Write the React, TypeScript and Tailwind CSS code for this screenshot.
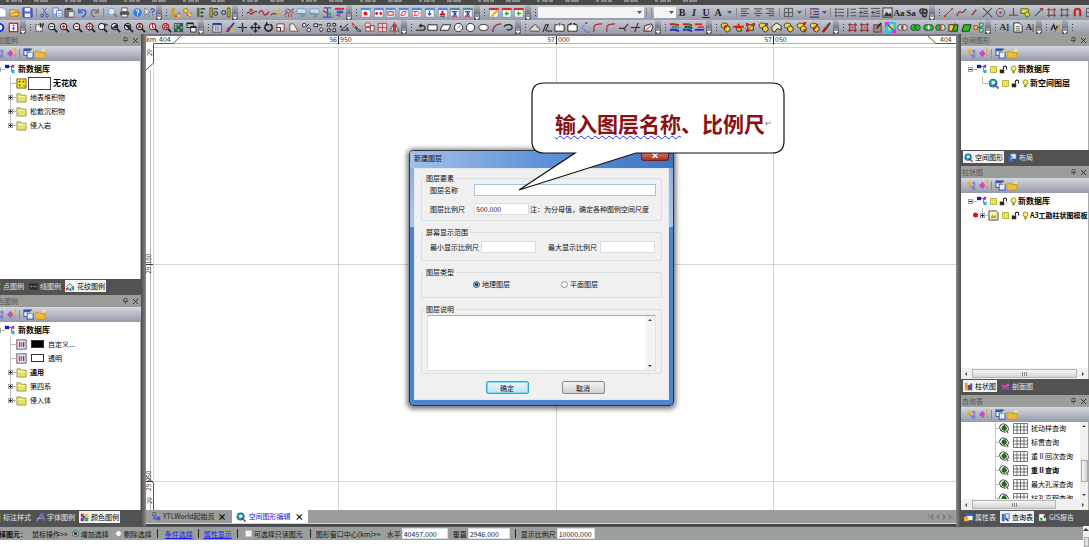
import React from "react";

const R = "#d42a2a";
const K = "#222";
const B = "#2b50d8";
const Y = "#f2d43c";
const G = "#23c623";

type Glyph = React.ReactNode;

const Lens = ({ c = K, children }: { c?: string; children?: React.ReactNode }) => (
  <g fill="none" stroke={c}>
    <circle cx="5" cy="5" r="3.4" fill="#f3f3f3" strokeWidth="1.1" />
    <path d="M7.6 7.6L11 11" stroke={K} strokeWidth="2" />
    {children}
  </g>
);
const Win = ({ top = "#4f8be0", children }: { top?: string; children?: React.ReactNode }) => (
  <g>
    <rect x="1.5" y="1.5" width="9.5" height="9.5" fill="#fff" stroke="#7d93bb" strokeWidth=".8" />
    <rect x="1" y="1" width="10.5" height="2.4" fill={top} />
    {children}
  </g>
);
const Poly = ({ children }: { children?: React.ReactNode }) => (
  <g>
    <path d="M1 3l3-2 4 1 1 3-4 2-3-1z" fill={Y} stroke={K} strokeWidth=".8" />
    <path d="M5 6l3-2 3 2v3l-3 2-3-2z" fill={Y} stroke={K} strokeWidth=".9" />
    {children}
  </g>
);
const Rings = ({ a = "none", b = "none", m = "none" }: { a?: string; b?: string; m?: string }) => (
  <g stroke={K} strokeWidth=".8">
    <circle cx="4" cy="6" r="3.2" fill={a} />
    <circle cx="8" cy="6" r="3.2" fill={b} />
    <ellipse cx="6" cy="6" rx="1.3" ry="2.5" fill={m} stroke="none" />
  </g>
);
const S = ({ d, c = K, f = "none", w = 1 }: { d: string; c?: string; f?: string; w?: number }) => (
  <path d={d} stroke={c} fill={f} strokeWidth={w} />
);

const glyphs: Record<string, Glyph> = {
  new: <S d="M2 1h5l3 3v7H2z" c="#8192b4" f="#fff" />,
  open: (<g><S d="M1 10V3h4l1 1h4v6z" c="#a87a1c" f="#f7d774" /><S d="M1 10l3-4h8l-3 4z" c="#b8861e" f="#fbc640" /></g>),
  save: (<g><S d="M1 1h9l1 1v9H1z" c="#3a3ca0" f="#5a5fd0" /><path d="M3 1h6v4H3zM3 7h6v4H3z" fill="#eef" /></g>),
  cut: (<g><S d="M4 1l4 7M8 1L4 8" c="#4a6ab8" /><circle cx="3.4" cy="9.4" r="1.6" stroke={B} fill="none" /><circle cx="8.6" cy="9.4" r="1.6" stroke={B} fill="none" /></g>),
  copy: (<g><S d="M1 1h6v7H1z" c="#5a7cc0" f="#e9f0fc" /><S d="M5 4h6v7H5z" c="#5a7cc0" f="#fff" /><S d="M6 7h4M6 9h4" c="#7d9bd8" /></g>),
  paste: (<g><S d="M1 2h8v9H1z" c="#555" f="#777" /><S d="M5 5h6v6H5z" c="#666" f="#e6e6e6" /><path d="M3 1h4v2H3z" fill="#333" /></g>),
  undo: <S d="M2 2v4h4M2.500 5.500C5 1.500 10 2.500 9.500 6.500S7 10 5.500 11" c="#3a68d8" w={1.7} />,
  redo: <S d="M10 2v4H6M9.500 5.500C7 1.500 2 2.500 2.500 6.500S5 10 6.500 11" c="#6c7078" w={1.5} />,
  find: (<g><circle cx="5" cy="5" r="3.600" fill="#d9ecfa" stroke="#6e9cc8" /><S d="M7.500 7.500L11 11" c="#a8701e" w={2} /></g>),
  print: (<g><path d="M3 1h6v4H3z" fill="#fff" stroke="#555" /><path d="M1 5h10v4H1z" fill="#555" /><path d="M3 8h6v3H3z" fill="#fff" stroke="#555" /></g>),
  help: (<g><circle cx="6" cy="6" r="4.600" fill="#2d7be4" /><path d="M4.500 4.500c0-2 3-2 3 0 0 1-1.500 1-1.500 2.500M6 8v1.300" fill="none" stroke="#fff" strokeWidth="1.200" /></g>),
  helpq: (<g><S d="M1 1v8l2-2 2 4 1-1-2-4h3z" c="#555" f="#fff" w={0.7} /><path d="M7.500 3.500c0-2.500 3.500-2.500 3.500 0 0 1.200-1.700 1.200-1.700 2.800M9.300 7.500V9" fill="none" stroke={B} strokeWidth="1.300" /></g>),
  barA: (<g><path d="M2 1h3v10H2z" fill="#c8a41e" /><S d="M5 10h4l1-4" c={R} w={1.4} /><path d="M8 8h3v3H8z" fill={Y} /></g>),
  barB: (<g><circle cx="4" cy="4" r="2.400" fill={Y} stroke="#a07c14" /><S d="M5 8l4 2 1-4" c={R} w={1.200} /><path d="M7 7h3v3H7z" fill={Y} /></g>),
  barC: (<g><path d="M2 1h3v10H2z" fill="#5a7a1c" /><S d="M6 2h5M6 6h3M6 10h3" w={1.400} /></g>),
  barD: (<g><path d="M2 1h3v10H2z" fill="#c8a41e" stroke={K} strokeWidth=".6" /><circle cx="8.500" cy="7" r="2" fill="none" stroke={K} /><S d="M6 2h5" /></g>),
  barE: (<g><circle cx="4" cy="6" r="2.200" fill="none" stroke={K} /><path d="M8 1h3v10H8z" fill="#c8a41e" stroke={K} strokeWidth=".6" /></g>),
  curveA: (<g><S d="M1 7c3-4 4 3 6 0s3-2 5-2" c="#a02020" w={1.200} /><path d="M4 2h3v3H4z" fill={R} /></g>),
  curveB: <S d="M1 7c2-5 4-3 5 0s3 2 6-2" c="#c02222" w={1.400} />,
  curveC: (<g><S d="M0 9c3-4 4 0 6-2" c="#a02020" w={1.200} /><S d="M6 7l4-5" c="#e8b220" w={2.400} /></g>),
  curveD: <S d="M1 5l3-3 3 2 4-2M1 9l2-4 2 2 3-2 3 2M2 10v1M5 8v3M8 8v3" c="#9c3030" />,
  scr: (<g><S d="M1 2h10v5H1z" c="#6e9fc8" f="#c4e0f0" /><S d="M1 8c3-3 5 2 9 0" c="#4b7e9e" /><S d="M5 10h4" c="#3a9a70" /></g>),
  measA: (<g><S d="M2 1h8M6 1v10M1 11h10" c="#3d54c8" w={1.500} /><S d="M1 4l9 5" c={R} w={1.500} /><path d="M7 6h3v3H7z" fill="#2a9" /></g>),
  measB: (<g><path d="M1 1h10v2H1z" fill={R} /><path d="M3 4h7v3H3z" fill="#3a58d0" /><S d="M6 6v5M2 9h3" c="#a040c0" w={1.500} /></g>),
  winDot: <Win><circle cx="6" cy="7" r="2.200" fill="#e01818" /></Win>,
  winDots: <Win><circle cx="4" cy="7" r="1.600" fill="#e01818" /><circle cx="8.500" cy="7" r="1.600" fill="#e01818" /></Win>,
  winRect: <Win><S d="M3 5h6v4H3z" c={R} f="#f8dada" /></Win>,
  winSlant: <Win><S d="M3 9l2-4h4l-2 4z" c={R} /></Win>,
  winD: <Win><S d="M3 5h4c3 1 3 3 0 4H3l2-2z" c={R} /></Win>,
  winDown: <Win><S d="M6 4v5M4 7l2 2 2-2" c={B} w={1.300} /></Win>,
  winStamp: <Win><path d="M5 4h2v3h2v2H3V7h2z" fill="#c01010" /><S d="M3 10h6" /></Win>,
  winI: <Win top="#3a9a8a"><S d="M3 5h6M6 5v5M3 10h6" c="#b02050" w={1.300} /><path d="M5 6h3v3H5z" fill={B} /></Win>,
  calPen: <Win top={R}><S d="M4 10l6-6" c="#e8a820" w={2.200} /></Win>,
  calPlus: <Win top={R}><S d="M6 9.500V5M4 7h5" c="#2bb52b" w={1.600} /></Win>,
  left: <S d="M1 2h9M1 4.500h6M1 7h9M1 9.500h6" c="#444" />,
  center: <S d="M1 2h9M3 4.500h5M1 7h9M3 9.500h5" c="#444" />,
  right: <S d="M1 2h9M4 4.500h6M1 7h9M4 9.500h6" c="#444" />,
  border: <S d="M1.500 1.500h9v9h-9zM6 1.500v9M1.500 6h9" c="#555" />,
  spacing: (<g><S d="M1 2h10M5 5h6M5 8h6M1 11h10" c="#533a7c" w={1.300} /><S d="M2 4v5" c={R} /></g>),
  bullets: (<g><S d="M4 2.500h7M4 6h7M4 9.500h7" c="#555" w={1.200} /><path d="M1 1.500h2v2H1zM1 5h2v2H1zM1 8.500h2v2H1z" fill="#444" /></g>),
  numbers: (<g><S d="M5 2.500h6M5 6h6M5 9.500h6M2 1v10" c="#555" w={1.200} /></g>),
  indent: <S d="M1 1.500h10M6 4.500h5M6 7h5M1 10h10M4 4L1.500 6 4 8M2 6h4" c="#444" />,
  image: (<g><rect x="1" y="1" width="10" height="10" fill="#d0d4dc" stroke="#333" /><path d="M2 10l3-5 2 3 2-2 2 4z" fill="#333" /></g>),
  knot: (<g fill="#8a8d94" stroke="#333" strokeWidth="1.500"><circle cx="4.500" cy="4.500" r="2.500" /><circle cx="7.500" cy="5" r="2.500" /><circle cx="7" cy="8.500" r="2.200" /></g>),
  line: (<g><S d="M2 10l8-8" c="#7a3434" /><path d="M9 1h2v2H9zM1 9h2v2H1z" fill={R} /></g>),
  zig: <S d="M1 10c2-6 3-5 5-4s3-1 5-4" c="#7a3434" w={1.200} />,
  dash: <S d="M3 9l5-6" c="#933" w={1.300} />,
  cross: <S d="M1 1l10 10M11 1L1 11" c="#555" w={1.200} />,
  target: (<g><circle cx="6" cy="6" r="4.500" fill="none" stroke="#555" /><circle cx="6" cy="6" r="1.300" fill={R} /></g>),
  perp: <S d="M6 1v8M1 9h10" c="#933" w={1.200} />,
  yshape: (<g><S d="M1 2h8v5H5L1 7z" c="#5b5b10" f={Y} /><circle cx="8" cy="8" r="2.500" fill={Y} stroke="#3a7a2a" /></g>),
  arrow: (<g><S d="M2 10l7-7" c="#555" w={1.200} /><path d="M7 1h4v4z" fill="#933" /></g>),
  crop: (<g><S d="M3 1v10M9 1v10M1 3h10M1 9h10" c="#7a3434" /></g>),
  magnet: <S d="M3 10V5c0-4 6-4 6 0v5" c="#c22" w={2.400} />,
  ring: <circle cx="4" cy="6" r="4" fill="#fff" stroke="#1b2ad0" strokeWidth="2" />,
  info: (<g><rect x="1.500" y="1.500" width="9" height="9" fill="#fff" stroke="#e02020" strokeWidth="1.500" /><path d="M5 3h2v1.500H5zM5 5.500h2V9H5z" fill={B} /></g>),
  marquee: (<g><path d="M2 3h7v7H2z" fill="#eee" stroke={K} strokeDasharray="1.500 1" /><S d="M7 1v5M9 3v3M10 1v3" w={1.300} /></g>),
  zMinus: <Lens><path d="M3 5h4" /></Lens>,
  zPlus: <Lens><path d="M3 5h4M5 3v4" stroke={R} strokeWidth="1.500" /></Lens>,
  zMinusR: <Lens><path d="M3 5h4" stroke={R} /></Lens>,
  zFit: <Lens><path d="M0 5h10M5 0v10" stroke={R} /></Lens>,
  zPan: <Lens><path d="M9 1v4M8 3h4" /></Lens>,
  zBlack: <Lens><path d="M2 7l5-4 1 3z" fill={K} /></Lens>,
  zBlack2: <Lens><path d="M2 3l5 1v4z" fill={K} /></Lens>,
  zA: <Lens><path d="M3 7l2-4 2 4M4 6h2" stroke={R} strokeWidth="1.300" /></Lens>,
  zPin: <Lens c="#823"><path d="M5 2v4l2 1" stroke={R} strokeWidth="1.300" /></Lens>,
  zGrid: <Lens c="#823"><path d="M2 4h6M2 6h6M4 2v6M6 2v6" stroke={R} /></Lens>,
  grid: (<g><rect x="1" y="1" width="10" height="10" fill="#355" /><path d="M2 2h2v2H2zM5 2h2v2H5zM2 5h2v2H2zM8 5h2v2H8zM5 8h2v2H5z" fill="#8fd08f" /></g>),
  wins: (<g><S d="M1 1h7v5H1z" f="#ccc" /><S d="M5 5h6v6H5z" f="#eee" /><path d="M1 1h7v1.500H1zM5 5h6v1.500H5z" fill={K} /></g>),
  cols: (<g><rect x="1" y="2" width="9" height="9" fill="#fff" stroke="#445" /><path d="M1 1h9v2.500H1z" fill="#2a3ab0" /><S d="M3.500 4v6M5.500 4v6M7.500 4v6" c="#556" /></g>),
  brush: (<g><S d="M4 8l6-7" c="#444" w={2} /><path d="M1 11l2-5 3 2-2 3z" fill="#a21aa2" /><path d="M6 8h4v3H6z" fill="#c8c820" /></g>),
  plus: (<g><S d="M6 1v10M1 6h10" w={1.200} /><path d="M4.500 4.500h3v3h-3z" fill="#555" /></g>),
  move: <S d="M6 1v10M1 6h10M4 3l2-2 2 2M4 9l2 2 2-2M3 4L1 6l2 2M9 4l2 2-2 2" w={1.200} />,
  rotate: <S d="M4 2.500a4 4 0 1 0 4 0M4 0v3h3" w={1.700} />,
  square: (<g><S d="M2 2h8v8H2z" c="#933" f="#eee" /><S d="M2 6h4v4" /></g>),
  trap: <S d="M2 2h4l5 8H2z" c="#844" f="#eee" />,
  shapes: (<g fill="#eee" stroke={K}><circle cx="3.500" cy="3.500" r="2" /><circle cx="8.500" cy="8.500" r="2" /><path d="M6 5l3-3" /></g>),
  shapes2: (<g fill="#eee" stroke={K}><path d="M1 2h4v3H1zM6 3h4M9 6l2 2-2 3-2-3z" /></g>),
  four: <S d="M1.500 1.500h3v3h-3zM7.500 1.500h3v3h-3zM1.500 7.500h3v3h-3zM7.500 7.500h3v3h-3z" f="#eee" />,
  angle: (<g><S d="M10 2L2 9h9" /><path d="M1 4h2v2H1zM8 6h2v2H8z" fill={K} /></g>),
  triR: (<g><S d="M1 1l2 5h4z" c={R} /><S d="M5 6l2 4h4z" f="#eee" /></g>),
  shapesR: (<g fill="#eee"><ellipse cx="4" cy="3" rx="3" ry="2" stroke={R} /><path d="M2 6h5v4H2zM7 4h4v6H7z" stroke="#844" /></g>),
  squareR: <S d="M1.500 1.500h9v9h-9zM1.500 6h9M6 1.500v9" c="#a33" f="#ded0d0" w={0.8} />,
  mirror: (<g><S d="M5 2v8H1zM7 2v8h4z" c="#555" f="#ccc" /><S d="M6 0v12" c={R} /></g>),
  hook: <S d="M1 9h7c4 0 4-5 0-5H5M7 2L5 4l2 2" w={1.200} />,
  rect: <S d="M1 3h10v6H1z" f="#fff" />,
  para: <S d="M3 3h9l-3 6H0z" f="#fff" />,
  circR: (<g><circle cx="6" cy="6" r="4.500" fill="#fff" stroke={K} /><S d="M5 7l3-3" c={R} /></g>),
  circ: <circle cx="6" cy="6" r="4.500" fill="#fff" stroke={K} />,
  ell: <ellipse cx="6" cy="6" rx="5" ry="3.300" fill="#fff" stroke={K} />,
  arc: <S d="M2 11C2 6 5 2 11 2" c="#722" w={1.200} />,
  loop: <S d="M1 5c2-3 9-3 9 1 0 3-5 3-6 2" w={1.200} />,
  cloud: <S d="M1 9c0-3 2-3 3-3 0-4 5-4 5 0 3 0 3 3 2 4H2z" c="#633" f="#ddd" />,
  penc: <S d="M1 11L4 3h3L4 9c2 2 4 0 7 1" w={1.100} />,
  gapBox: (<g><S d="M4 3H1v7h10V3H8" f="#fff" /><path d="M5 1h2v3H5z" fill={R} /></g>),
  gapBox2: (<g><S d="M4 3H1v7h10V3H8" f="#fff" /><path d="M3 1h2v2H3zM7 1h2v2H7z" fill={K} /></g>),
  dots: (<g><path d="M7 1L2 6l5 5h4" fill="none" stroke={B} strokeDasharray="2 1.500" /><path d="M6 0h2v2H6z" fill={R} /></g>),
  arcR: <S d="M2 11V6c0-3 3-4 9-4" c="#b22" w={1.200} />,
  trim: <S d="M1 7h6l4-5M7 7l1 3" c="#522" w={1.200} />,
  cross2: <S d="M1 6h10M9 1L5 11" c="#522" w={1.200} />,
  shape5: (<g><S d="M2 4l7-2 2 3-2 5-8 0z" f="#eee" /><S d="M3 9l6-5" c={R} /></g>),
  layers: (<g fill="none" strokeWidth="2.100"><path d="M1 2.500h5l5 1" stroke="#e01c1c" /><path d="M3 5.500h4l4 1" stroke="#1ca84a" /><path d="M1 8.500h6l4 1.500" stroke="#2424e0" /></g>),
  layers2: (<g fill="none" strokeWidth="2.100"><path d="M1 2.500h5l5 1" stroke="#e01c1c" /><path d="M3 5.500h4l4 1" stroke={K} /><path d="M1 8.500h6l4 1.500" stroke="#2424e0" /><path d="M4 9l3-6 3 6" stroke="#1ca84a" strokeWidth="1.300" /></g>),
  layers3: (<g fill="none" strokeWidth="1.900"><path d="M1 2.500h8" stroke="#e01c1c" /><path d="M4 5.500h7" stroke="#c44" /><path d="M1 8.500h10" stroke="#2424e0" /></g>),
  polyDot: <Poly><circle cx="6" cy="5" r="1.800" fill="#e01818" /></Poly>,
  polyBar: (<g><S d="M3 6h6v4H5z" f={Y} /><S d="M0 5h12M6 2v5" c="#e01818" w={2} /></g>),
  polyX: (<g><S d="M3 3h6v6H3z" f={Y} /><path d="M1 1h3v3H1zM8 1h3v3H8zM1 8h3v3H1z" fill="#e01818" /><S d="M3 9l6-7" c={R} /></g>),
  polyP: <Poly><path d="M8 1h3v3H8z" fill="#703ac0" /></Poly>,
  polyE: (<g><path d="M1 5l5-4 5 3v5l-4-2-3 4-3-2z" fill="#f2e8b8" stroke={K} /></g>),
  poly: <Poly />,
  polyR: <Poly><path d="M8 8h3v3H8zM8 0h3v3H8z" fill="#e01818" /></Poly>,
  polyPen: <Poly><path d="M5 9l5-7" stroke={R} strokeWidth="1.500" /></Poly>,
  pen: (<g><S d="M2 11l4-5" c="#a11" w={2.600} /><S d="M6 6l4-5" c="#444" w={2.400} /></g>),
  frameX: (<g><S d="M3 1v10M9 1v10M1 3h10M1 9h10" c="#8a2020" /><path d="M5 5h2v2H5z" fill={R} /></g>),
  penBox: (<g><S d="M2 3h8v8H2z" c="#633" f="#a88" /><S d="M5 7l5-6" w={1.600} /></g>),
  wild: (<g><path d="M0 0h12v12H0z" fill="#28c8f0" /><path d="M0 0h5L0 6zM12 12H6l6-5z" fill="#f028c8" /><path d="M3 4l6-2v7H4z" fill="#e8e828" /><S d="M3 3l6 6" c={B} w={1.500} /></g>),
  ringsM: <Rings a="#ddd" b="#ddd" m="#e03030" />,
  ringsAll: <Rings a={G} b={G} m="#178a17" />,
  ringsAll2: <Rings a={G} b={G} m="#fff" />,
  ringsL: <Rings a={G} b="#ddd" m="#e03030" />,
  half: (<g><S d="M1 3h6l-2 7H1z" f={Y} /><S d="M7 3h4l-1 7H5z" f={G} /><S d="M8 1L4 11" c={R} /></g>),
  greenP: <S d="M3 3h8l-2 7H1z" f={G} />,
  blocks: (<g><S d="M1 4h4v4H1z" c={R} f={Y} /><S d="M7 1h4v4H7zM7 7h4v4H7z" c="#2a7a5a" f="#9ad8b8" /><S d="M5 6h4" c={B} /></g>),
  page: (<g><S d="M2 1h6l3 3v7H2z" f="#fff" /><S d="M4 5h5M4 7h5M4 9h5" c="#564" /></g>),
  wpen: (<g><S d="M1 9l3-6 2 6 2-5" w={1.400} /><S d="M6 10l5-7" c="#b89020" w={1.700} /></g>),
  tools: (<g><circle cx="3.500" cy="4" r="2.500" fill="#e8b030" /><S d="M4 6l3 3 3-4" c="#c04890" /><path d="M7 2h3v3H7zM7 7h3v4H7z" fill="#6f86d8" /></g>),
  gem: (<g><path d="M1 6l4-4 3 4-3 4z" fill="#c44ad0" /><path d="M9 0h2v6H9z" fill="#e8b82c" /><path d="M9 7h2v2H9z" fill="#d09a20" /></g>),
  panes: (<g><rect x="1" y="1" width="8" height="7" fill="#fff" stroke="#2a50a0" /><path d="M1 1h9v2.500H1z" fill="#2c58c0" /><rect x="4.500" y="4.500" width="6.500" height="6.500" fill="#e8eefc" stroke="#2a50a0" /><path d="M8 2h3v3H8z" fill={Y} /></g>),
  folderN: (<g><path d="M0 4h4l1 1h6v6H0z" fill="#f2bd33" stroke="#b8862a" strokeWidth=".7" /><path d="M8 1h3v3H8z" fill="#fbe58a" /></g>),
  folder: (<g><path d="M1 2h4l1 1.500h5V11H1z" fill="#e8e06a" stroke="#8a842e" strokeWidth=".8" /><path d="M2 5h8" stroke="#fffbb8" /></g>),
  db: (<g><path d="M0 1h5v4H0z" fill="#1414d8" /><path d="M5 3h3v6h2" stroke="#555" fill="none" /><path d="M8 1h3v3.500H8z" fill="#c424b4" /><path d="M8 7h3.500v4H8z" fill="#22b8c8" /></g>),
  pattern: (<g><path d="M1 1h10v10H1z" fill="#f8e824" stroke="#6a5e10" /><path d="M3 3h2v2H3zM7 3h2v2H7zM3 7h2v2H3zM8 8h2v1H8z" fill="#554" /></g>),
  bars: (<g><rect x="1" y="1" width="10" height="10" fill="#fff" stroke="#444" /><path d="M3 3h1.600v6H3z" fill="#d01a8a" /><path d="M5.200 3h1.600v6H5.200z" fill="#e85a1a" /><path d="M7.500 3h1.700v6H7.500z" fill="#2450e0" /></g>),
  sun: (<g><path d="M2 2h8v8H2z" fill="#f4ee40" stroke="#a8a41c" /><circle cx="6" cy="6" r="2" fill="#fffbd0" stroke="#b8b020" strokeWidth=".8" /></g>),
  lock: (<g><path d="M1 6h6v5H1z" fill="#2a2a18" /><path d="M6 6V3c0-2 4-2 4 0v3" stroke={K} fill="none" strokeWidth="1.400" /></g>),
  bulb: (<g><circle cx="6" cy="4.500" r="3.300" fill="#fbf464" stroke="#7c7820" /><path d="M4.500 8h3v3h-3z" fill="#8a8418" /></g>),
  globe: (<g><circle cx="5.500" cy="5.500" r="4.800" fill="#1c66b8" /><path d="M2 3l4-1 3 3-3 2-1 3-3-4z" fill="#46b878" /><circle cx="6" cy="5" r="2" fill="#e4f4fc" /><path d="M9 9l2.500 2.500" stroke="#d03030" strokeWidth="2" /></g>),
  report: (<g><path d="M1 1h8l2 2v8H1z" fill="#f6f4b0" stroke="#444" /><path d="M3 8l2-3 2 2 2-3v5H3z" fill="#c8a020" /></g>),
  eye: (<g><ellipse cx="5.500" cy="5.500" rx="5" ry="4" fill="#eef4ee" stroke="#333" transform="rotate(35 5.500 5.500)" /><path d="M3 4l3-2 3 4-3 3-3-2z" fill="#186a28" /><path d="M8 8l2 3" stroke="#8a7a14" strokeWidth="1.600" /></g>),
  paint: (<g><path d="M1 6l4-4 4 4-4 4z" fill="#e8ecf6" stroke="#345" /><path d="M0 8h3v3H0z" fill="#e03030" /><path d="M8 6h3v5H8z" fill="#28b040" /><path d="M5 9h2v3H5z" fill={B} /></g>),
  lines: (<g><path d="M0 2h12v8H0z" fill="#2b2b2b" /><path d="M0 6h12M3 4v4M8 4v4" stroke="#777" /></g>),
  italic: (<g><path d="M1 11L8 1l3 9" stroke="#6a7ae0" strokeWidth="2" fill="none" /><path d="M1 7h8" stroke="#b8c0f8" /></g>),
  palette: (<g><path d="M1 1h4v4H1z" fill="#e02020" /><path d="M6 1h5v4H6z" fill="#e8c820" /><path d="M1 6h4v5H1z" fill="#7a28d8" /><path d="M6 6h5v5H6z" fill="#2aa83a" /><path d="M4 4h3v3H4z" fill="#2858e0" /></g>),
  layout: (<g><path d="M3 1h8v7H3z" fill="#dce6fa" stroke="#3a58a8" /><path d="M1 4h6v7H1z" fill="#3a6ad0" /><path d="M4 8l5-6" stroke="#e8ecf8" strokeWidth="1.500" /></g>),
  column: (<g><path d="M1 1h4v10H1z" fill="#e0a030" /><path d="M5 4h3v7H5z" fill="#c03030" /><path d="M8 2h3v9H8z" fill="#2a60c8" /></g>),
  section: (<g><path d="M1 2l3 3 3-2 4-1v3L7 7 4 8 1 5z" fill="#e048a0" /><path d="M1 7l3 2 7-3v4H1z" fill="#5a60d8" /></g>),
  props: (<g><path d="M3 2h9v8H3z" fill="#fff" stroke="#2a58b0" /><path d="M3 1h9v3H3z" fill="#2c68d8" /><path d="M0 5h6v6H0z" fill="#f0b030" /></g>),
  query: (<g><path d="M1 1h4v10H1z" fill="#3a70d0" /><path d="M6 1h5v7H6z" fill="#cfe0f8" stroke="#4468a8" /><path d="M6 7l4 4" stroke="#333" strokeWidth="1.600" /></g>),
  gis: (<g><path d="M1 1h7l3 3v7H1z" fill="#fff" stroke="#444" /><path d="M3 6h3v4H3z" fill="#2a9a3a" /><path d="M7 3l4 1-2 4z" fill="#222" /></g>),
  link: (<g><path d="M1 1h4v4H1z" fill="#98a4e0" stroke="#445" /><path d="M3 5v4h4" stroke={B} fill="none" strokeWidth="1.500" /><path d="M6 6h5v5H6z" fill="#4a5ad0" /></g>),
};

const letters: Record<string, string> = { fontA: "Aa", fontS: "Sa", aBox: "A]", aLine: "A|" };

function Icon({ n, className = "size-[11px]" }: { n: string; className?: string }) {
  return (
    <svg viewBox="0 0 12 12" className={`shrink-0 ${className}`} aria-hidden="true">
      {glyphs[n]}
    </svg>
  );
}

function Tools({ items }: { items: string }) {
  return (
    <>
      {items.split(" ").map((n, i) =>
        n === "|" ? (
          <span key={i} className="mx-[2px] h-[9px] w-px shrink-0 bg-[#858a96]" />
        ) : (
          <button
            key={i}
            type="button"
            aria-label={n}
            className="flex h-full min-w-0 flex-1 items-center justify-center font-['Liberation_Serif',serif] text-[9px] leading-[12px] font-bold text-[#222]"
          >
            {letters[n] ?? <Icon n={n} />}
          </button>
        )
      )}
    </>
  );
}

const Grip = () => (
  <span className="flex w-[5px] shrink-0 flex-col items-center gap-[2px]">
    <i className="size-px bg-[#444]" />
    <i className="size-px bg-[#444]" />
    <i className="size-px bg-[#444]" />
  </span>
);

const More = () => (
  <button type="button" aria-label="more" className="flex h-full w-[8px] shrink-0 items-end justify-center pr-[2px]">
    <span className="flex h-full w-[6px] items-end justify-center rounded-r-[2px] bg-linear-to-b from-[#b4b8c2] to-[#484b56]">
      <svg viewBox="0 0 6 6" className="size-[6px]"><path d="M1 1h4M1 3h4L3 5.500z" fill="#fff" stroke="#fff" strokeWidth=".6" /></svg>
    </span>
  </button>
);

function Group({ items, w, first = false }: { items: string; w: string; first?: boolean }) {
  return (
    <div className={`flex h-full shrink-0 items-center ${w}`}>
      {!first && <Grip />}
      <Tools items={items} />
      <More />
    </div>
  );
}

const Caret = () => (
  <svg viewBox="0 0 5 3" className="h-[3px] w-[5px] shrink-0"><path d="M0 0h5L2.500 3z" fill="#555" /></svg>
);

function Combo({ label, w }: { label: string; w: string }) {
  return (
    <span className={`flex h-[11px] shrink-0 items-center bg-[#f4f4f4] pr-[2px] ${w}`}>
      <select aria-label={label} className="h-full min-w-0 flex-1 appearance-none text-[7px]"><option></option></select>
      <Caret />
    </span>
  );
}

const bar = "flex shrink-0 items-center overflow-hidden bg-linear-to-b from-[#c6cad4] to-[#979ba7]";

function Toolbars() {
  const sep = <span className="mx-[2px] h-[9px] w-px shrink-0 bg-[#858a96]" />;
  const fmt = "w-[12px] shrink-0 text-center font-['Liberation_Serif',serif] text-[10px] leading-[12px] text-[#222]";
  return (
    <header className="shrink-0">
      <div className="h-[5px] bg-[#4a4a4a]">
        <svg className="block h-[5px] w-full" aria-hidden="true">
          <path d="M6 1h706" stroke="#b5b5b5" strokeWidth="2" strokeDasharray="3 2 6 1 4 12 5 1 8 17" opacity=".6" />
        </svg>
      </div>
      <div className={`${bar} h-[15px]`}>
        <div className="-ml-[4px] flex h-full shrink-0">
          <Group first w="w-[168px]" items="new open save | cut copy paste undo redo | find print help helpq" />
        </div>
        <Group w="w-[76px]" items="barA barB barC barD barE" />
        <Group w="w-[114px]" items="curveA curveB curveC curveD scr scr measA measB" />
        <Group w="w-[128px]" items="winDot winDots winRect winSlant winD winDown winStamp winI winI" />
        <Group w="w-[51px]" items="calPen calPlus calPlus" />
        <div className="flex h-full w-[404px] shrink-0 items-center">
          <Grip />
          <Combo label="字体" w="w-[106px]" />
          {sep}
          {sep}
          <Combo label="字号" w="w-[22px]" />
          <button type="button" className={`${fmt} font-bold`}>B</button>
          <button type="button" className={`${fmt} font-bold italic`}>I</button>
          <button type="button" className={`${fmt} font-bold underline`}>U</button>
          <button type="button" className={`${fmt} font-bold`}>A</button>
          <span className="flex w-[10px] justify-center"><Caret /></span>
          {sep}
          <div className="flex h-full w-[38px]"><Tools items="left center right" /></div>
          {sep}
          <div className="flex h-full w-[13px]"><Tools items="border" /></div>
          <span className="flex w-[8px] justify-center"><Caret /></span>
          {sep}
          <div className="flex h-full w-[13px]"><Tools items="spacing" /></div>
          <span className="flex w-[7px] justify-center"><Caret /></span>
          {sep}
          <div className="flex h-full min-w-0 flex-1"><Tools items="bullets numbers indent indent image fontA fontS knot" /></div>
          <More />
        </div>
        <div className="flex h-full w-[160px] shrink-0 items-center">
          <Grip />
          <Tools items="line zig dash cross target perp yshape arrow crop crop magnet border" />
        </div>
      </div>
      <div className={`${bar} h-[14px]`}>
        <div className="-ml-[5px] flex h-full shrink-0"><Group first w="w-[33px]" items="ring info" /></div>
        <Group w="w-[178px]" items="marquee zMinus zPlus zMinusR zFit zPan zBlack zBlack2 zA zPin zGrid grid wins" />
        <Group w="w-[203px]" items="cols brush plus move rotate square trap shapes shapes2 four angle triR shapesR squareR mirror" />
        <Group w="w-[114px]" items="hook rect para circR circ ell arc loop" />
        <Group w="w-[140px]" items="cloud penc gapBox gapBox2 dots arcR arcR trim cross2 shape5" />
        <Group w="w-[51px]" items="layers layers2 layers3" />
        <Group w="w-[127px]" items="polyDot polyBar polyX polyP polyE poly polyR polyPen pen" />
        <Group w="w-[152px]" items="frameX frameX penBox wild ringsM ringsAll ringsAll2 ringsL half greenP blocks" />
        <Group w="w-[51px]" items="aBox page aLine" />
        <Group w="w-[26px]" items="wpen" />
        <Grip />
      </div>
    </header>
  );
}

type Tab = { icon: string; text: string; on?: boolean };

function Panel({ title, tabs, grow, children }: { title: string; tabs: Tab[]; grow: string; children: React.ReactNode }) {
  return (
    <section className={`flex min-h-0 basis-[43px] flex-col ${grow}`}>
      <div className="flex h-[12px] shrink-0 items-center bg-[#9b9d9a] pr-[3px] pl-px text-[#555]">
        <h2 className="flex-1 text-[7px] leading-[12px] whitespace-nowrap">{title}</h2>
        <button type="button" aria-label="固定" className="mr-[5px]">
          <svg viewBox="0 0 5 6" className="h-[6px] w-[5px]"><path d="M1 .5h3v3H1zM0 3.500h5M2.500 3.500V6" stroke="#444" strokeWidth=".8" fill="none" /></svg>
        </button>
        <button type="button" aria-label="关闭">
          <svg viewBox="0 0 5 5" className="size-[5px]"><path d="M0 0l5 5M5 0L0 5" stroke="#333" /></svg>
        </button>
      </div>
      <div className="flex h-[15px] shrink-0 items-center bg-linear-to-b from-[#d3d7df] to-[#969baa] pl-[4px]">
        <div className="flex h-full w-[53px] items-center"><Tools items="tools gem | panes folderN" /></div>
      </div>
      <div className="flex min-h-0 flex-1 flex-col overflow-hidden border-r border-[#a9a9a9] bg-white">{children}</div>
      <div className="flex h-[16px] shrink-0 items-start gap-[3px] bg-[#525252] pt-px pl-[2px]" role="tablist">
        {tabs.map((t) => (
          <button
            key={t.text}
            type="button"
            role="tab"
            aria-selected={!!t.on}
            className={`flex h-[12px] items-center gap-[2px] px-[1px] text-[7px] leading-[12px] whitespace-nowrap ${t.on ? "bg-[#f3f4f6] text-black" : "text-[#e6e6e6]"}`}
          >
            <Icon n={t.icon} className="size-[9px]" />
            {t.text}
          </button>
        ))}
      </div>
    </section>
  );
}

function Gutter({ kind, box, dot = false }: { kind: "root" | "mid" | "last" | "deep"; box?: "+" | "-"; dot?: boolean }) {
  const w = kind === "root" ? "w-[16px]" : kind === "deep" ? "w-[38px]" : "w-[27px]";
  const x = kind === "root" ? 9.5 : kind === "deep" ? 34.5 : 21.5;
  const end = kind === "root" ? 16 : kind === "deep" ? 38 : 27;
  return (
    <svg className={`h-[14px] shrink-0 ${w}`} aria-hidden="true">
      <path d={`M${x} 7.500H${end}`} stroke="#b8b8b8" />
      {kind !== "root" && <path d={`M${x} 0V${kind === "last" ? 7.5 : 14}`} stroke="#c4c4c4" />}
      {box && (
        <>
          <rect x={x - 2} y="5.500" width="4" height="4" fill="#fff" stroke="#a4a4a4" />
          <path d={box === "+" ? `M${x - 1.5} 7.500h3M${x} 6v3` : `M${x - 1.5} 7.500h3`} stroke="#222" />
        </>
      )}
      {dot && <circle cx="14.500" cy="7" r="2.500" fill="#e01010" />}
    </svg>
  );
}

const Row = ({ children, bold = false }: { children: React.ReactNode; bold?: boolean }) => (
  <li className={`flex h-[14px] shrink-0 items-center whitespace-nowrap ${bold ? "font-bold" : ""}`}>{children}</li>
);

const States = () => (
  <span className="ml-[2px] flex">
    <Icon n="sun" className="mr-px size-[9px]" />
    <Icon n="lock" className="mr-px size-[9px]" />
    <Icon n="bulb" className="size-[9px]" />
  </span>
);

function Root({ states = false }: { states?: boolean }) {
  return (
    <Row bold>
      <Gutter kind="root" box="-" />
      <Icon n="db" className="size-[10px]" />
      {states ? <States /> : <span className="w-[3px]" />}
      <span className="text-[8px]">新数据库</span>
    </Row>
  );
}

const Folder = ({ text, bold, last }: { text: string; bold?: boolean; last?: boolean }) => (
  <Row bold={bold}>
    <Gutter kind={last ? "last" : "mid"} box="+" />
    <Icon n="folder" className="size-[11px]" />
    <span className="ml-[3px] text-[7px]">{text}</span>
  </Row>
);

const ScrollArrow = ({ d }: { d: string }) => (
  <svg viewBox="0 0 8 8" className="size-[8px] shrink-0"><path d={d} fill="#444" /></svg>
);

const HScroll = ({ thumb }: { thumb: string }) => (
  <div className="flex h-[11px] shrink-0 items-center bg-[#f0f0f0] px-px">
    <ScrollArrow d="M5 2v4L3 4z" />
    <div className="flex min-w-0 flex-1 px-[2px]">
      <div className={`flex h-[9px] items-center justify-center gap-px border border-[#b4b4b4] bg-linear-to-b from-[#f6f6f6] to-[#d4d4d4] ${thumb}`}>
        <i className="h-[4px] w-px bg-[#888]" /><i className="h-[4px] w-px bg-[#888]" /><i className="h-[4px] w-px bg-[#888]" />
      </div>
    </div>
    <ScrollArrow d="M3 2v4l2-2z" />
  </div>
);

const queries = ["扰动样查询", "标贯查询", "重Ⅱ回次查询", "重Ⅱ查询", "最大孔深查询", "钻孔高程查询"];

function LeftDock() {
  return (
    <aside className="-ml-[11px] flex w-[152px] shrink-0 flex-col">
      <Panel
        title="花纹图例"
        grow="grow-[218]"
        tabs={[{ icon: "palette", text: "点图例" }, { icon: "lines", text: "线图例" }, { icon: "paint", text: "花纹图例", on: true }]}
      >
        <ul className="pt-px">
          <Root />
          <Row bold>
            <Gutter kind="mid" />
            <Icon n="pattern" className="size-[11px]" />
            <span className="mr-[2px] ml-px h-[13px] w-[23px] border border-[#444] bg-white" />
            <span className="text-[8px]">无花纹</span>
          </Row>
          <Folder text="地表堆积物" />
          <Folder text="松散沉积物" />
          <Folder text="侵入岩" last />
        </ul>
      </Panel>
      <Panel
        title="颜色图例"
        grow="grow-[188]"
        tabs={[{ icon: "pattern", text: "标注样式" }, { icon: "italic", text: "字体图例" }, { icon: "palette", text: "颜色图例", on: true }]}
      >
        <ul className="pt-px">
          <Root />
          <Row>
            <Gutter kind="mid" />
            <Icon n="bars" className="size-[11px]" />
            <span className="mx-[4px] h-[8px] w-[13px] border border-[#333] bg-black" />
            <span className="text-[7px]">自定义...</span>
          </Row>
          <Row>
            <Gutter kind="mid" />
            <Icon n="bars" className="size-[11px]" />
            <span className="mx-[4px] h-[8px] w-[13px] border border-[#333] bg-white" />
            <span className="text-[7px]">透明</span>
          </Row>
          <Folder text="通用" bold />
          <Folder text="第四系" />
          <Folder text="侵入体" last />
        </ul>
      </Panel>
    </aside>
  );
}

function RightDock() {
  return (
    <aside className="flex w-[128px] shrink-0 flex-col">
      <Panel title="空间图形" grow="grow-[89]" tabs={[{ icon: "globe", text: "空间图形", on: true }, { icon: "layout", text: "布局" }]}>
        <ul className="pt-px">
          <Root states />
          <Row bold>
            <Gutter kind="last" />
            <Icon n="globe" className="size-[11px]" />
            <States />
            <span className="text-[8px]">新空间图层</span>
          </Row>
        </ul>
      </Panel>
      <Panel title="柱状图" grow="grow-[186]" tabs={[{ icon: "column", text: "柱状图", on: true }, { icon: "section", text: "剖面图" }]}>
        <ul className="min-h-0 flex-1 overflow-hidden pt-px">
          <Root states />
          <Row bold>
            <Gutter kind="last" box="+" dot />
            <Icon n="report" className="size-[11px]" />
            <States />
            <span className="text-[7px]">A3工勘柱状图模板</span>
          </Row>
        </ul>
        <HScroll thumb="w-full" />
      </Panel>
      <Panel
        title="查询表"
        grow="grow-[88]"
        tabs={[{ icon: "props", text: "属性表" }, { icon: "query", text: "查询表", on: true }, { icon: "gis", text: "GIS报告" }]}
      >
        <div className="flex min-h-0 flex-1">
          <ul className="-mt-px min-h-0 flex-1 overflow-hidden">
            {queries.map((q) => (
              <Row key={q} bold={q === "重Ⅱ查询"}>
                <Gutter kind="deep" />
                <Icon n="eye" className="size-[11px]" />
                <svg className="mx-[3px] h-[11px] w-[15px] shrink-0" aria-hidden="true">
                  <path d="M.5 .5h14v10h-14zM4 .5v10M7.500 .5v10M11 .5v10M.5 4h14M.5 7h14" fill="#fff" stroke="#555" strokeWidth=".8" />
                </svg>
                <span className="text-[7px]">{q}</span>
              </Row>
            ))}
          </ul>
          <div className="flex w-[8px] shrink-0 flex-col items-center bg-[#f0f0f0]">
            <ScrollArrow d="M2 5h4L4 3z" />
            <div className="mt-auto mb-[9px] h-[22px] w-[7px] border border-[#aaa] bg-linear-to-r from-[#f6f6f6] to-[#d4d4d4]" />
            <ScrollArrow d="M2 3h4L4 5z" />
          </div>
        </div>
        <HScroll thumb="w-4/5" />
      </Panel>
    </aside>
  );
}

function Workspace() {
  const cols: [number, string, string][] = [[192, "56", "950"], [410, "57", "000"], [627, "57", "050"]];
  const rows: [number, string, string][] = [[229, "29", "100"], [446, "29", "050"]];
  return (
    <main className="flex min-w-0 flex-1 flex-col">
      <div className="h-[2px] shrink-0 bg-[#75777d]" />
      <svg className="block min-h-0 w-full flex-1 bg-white" aria-hidden="true">
        <g stroke="#d6d6d6" fill="none">
          {cols.map(([x]) => (<line key={x} x1={x + 0.5} x2={x + 0.5} y1="0" y2="100%" />))}
          {rows.map(([y]) => (<line key={y} y1={y - 0.5} y2={y - 0.5} x1="0" x2="100%" />))}
          <line x1="8" x2="100%" y1="7.5" y2="7.5" stroke="#b4b4b4" />
          <line x1="8" x2="100%" y1="11.5" y2="11.5" />
          <line x1="4.5" x2="4.5" y1="34" y2="100%" stroke="#b4b4b4" />
          <line x1="7.5" x2="7.5" y1="8" y2="100%" />
        </g>
        <path d="M0 0h35l-8 7.500H7.500V27L0 34z" fill="#fff" />
        <path d="M35 0l-8 7.500H7.500V27L0 34" fill="none" stroke="#555" />
        <svg x="100%" overflow="visible"><path d="M-28 0l8 7.500H0" fill="#fff" stroke="#555" /><text x="-16" y="6" fontSize="7" fill="#333">404</text></svg>
        <svg y="100%" overflow="visible"><path d="M0-34l7.500 7V0" fill="#fff" stroke="#555" /><text transform="translate(6 -6) rotate(-90)" fontSize="6" fill="#444">29</text></svg>
        <g fontSize="7" fill="#333">
          <text x="0" y="6">km</text>
          <text x="13" y="6">404</text>
          <text transform="translate(6 20) rotate(-90)" fontSize="6">29</text>
          {cols.map(([x, a, b]) => (
            <g key={x}>
              <text x={x - 1} y="6" textAnchor="end">{a}</text>
              <text x={x + 2} y="6">{b}</text>
              <path d={`M${x + 0.5} 0v8`} stroke="#222" />
            </g>
          ))}
          {rows.map(([y, a, b]) => (
            <g key={y} fontSize="6">
              <text transform={`translate(5 ${y - 1}) rotate(-90)`}>{b}</text>
              <text transform={`translate(5 ${y + 2}) rotate(-90)`} textAnchor="end">{a}</text>
              <path d={`M0 ${y - 0.5}h7`} stroke="#333" />
            </g>
          ))}
        </g>
      </svg>
      <nav className="flex h-[13px] shrink-0 bg-[#9b9d9a] text-[7px] leading-[13px]">
        <a href="#start" className="flex items-center pl-[6px] text-[#222]">
          <Icon n="link" className="size-[9px]" />
          <span className="ml-[2px]">YTLWorld起始页</span>
          <b className="mr-[5px] ml-[3px] text-[9px] text-black">×</b>
        </a>
        <a href="#edit" className="flex items-center bg-white pl-[4px] text-[#2222dd]">
          <Icon n="globe" className="size-[10px]" />
          <span className="ml-[3px]">空间图形编辑</span>
          <b className="mr-[4px] ml-[4px] text-[9px] text-black">×</b>
        </a>
        <svg viewBox="0 0 26 8" className="mt-[3px] mr-[2px] ml-auto h-[8px] w-[26px]" aria-hidden="true">
          <path d="M5 1L2 4l3 3zM1 1v6M11 1L8 4l3 3zM15 1l3 3-3 3zM21 1l3 3-3 3zM25 1v6" fill="#808280" stroke="#808280" strokeWidth=".6" />
        </svg>
      </nav>
      <div className="h-[3px] shrink-0 border-t border-[#d8d8d8] bg-[#45464a]" />
    </main>
  );
}

const radio = "m-0 size-[7px] shrink-0 appearance-none rounded-full border border-[#8a929c] bg-white checked:border-[#555] checked:bg-[radial-gradient(circle,#123f66_0_35%,#9ed4f0_60%)]";
const field = "border border-[#d9dde3] bg-white px-px text-[7px] text-[#222] outline-none";

function StatusBar() {
  const bars = <span className="mx-[5px] h-[9px] w-px shrink-0 bg-[#222]" />;
  return (
    <footer className="flex shrink-0 items-start bg-white">
      <div className="flex h-[14px] min-w-0 flex-1 items-center overflow-hidden border-t border-[#55575a] bg-[#9b9f9c] text-[7px] leading-[12px] whitespace-nowrap text-[#111]">
        <div className="-ml-[8px] flex shrink-0 items-center">
          <b className="mr-[5px]">选择图元：</b>
          <span className="mr-[4px]">鼠标操作&gt;&gt;</span>
          <label className="mr-[6px] flex items-center gap-[2px]"><input type="radio" name="mode" defaultChecked className={radio} />增加选择</label>
          <label className="flex items-center gap-[2px]"><input type="radio" name="mode" className={radio} />剔除选择</label>
          {bars}
          <a href="#filter" className="ml-[2px] text-[#1c1cf0] underline">条件选择</a>
          {bars}
          <a href="#props" className="text-[#1c1cf0] underline">属性显示</a>
          {bars}
          <label className="ml-[2px] flex items-center gap-[2px]">
            <input type="checkbox" className="m-0 size-[7px] appearance-none border border-[#c4c4c4] bg-[#f4f4f4] checked:bg-[#2b50d8]" />
            可选择只读图元
          </label>
          <span className="w-[2px]" />
          {bars}
          <span className="mr-[6px]">图形窗口中心(km)&gt;&gt;</span>
          <label htmlFor="cx">水平</label>
          <input id="cx" defaultValue="40457.000" className={`${field} mr-[5px] ml-px h-[11px] w-[46px]`} />
          <label htmlFor="cy">垂直</label>
          <input id="cy" defaultValue="2946.000" className={`${field} ml-px h-[11px] w-[42px]`} />
          {bars}
          <label htmlFor="sc">显示比例尺</label>
          <input id="sc" defaultValue="10000.000" className={`${field} ml-px h-[11px] w-[38px]`} />
        </div>
      </div>
      <div className="flex h-[21px] w-[6px] shrink-0 flex-col items-center justify-between overflow-hidden bg-[#eee]">
        <ScrollArrow d="M1 5h6L4 2z" />
        <span className="h-[10px] w-[5px] border border-[#aaa] bg-[#ddd]" />
      </div>
    </footer>
  );
}

const fs = "mx-[6px] min-w-0 rounded-[2px] border border-[#dcdfe2] px-[5px]";
const lg = "-ml-[3px] px-[2px] text-[7px] leading-[10px]";

function Dialog() {
  return (
    <div
      role="dialog"
      aria-labelledby="dlg-title"
      className="absolute top-[150px] left-[409px] flex w-[265px] flex-col rounded-[4px] border border-[#2c3340] bg-linear-to-b from-[#86a8dc] via-[#a9c8ee] via-30% to-[#4f84cc] to-30% px-[4px] pb-[5px] text-[7px] leading-[10px] text-[#111] shadow-[0_1px_5px_2px_rgba(0,0,0,.55)]"
    >
      <div className="-mx-[4px] flex h-[17px] items-start rounded-t-[3px] bg-linear-to-r from-[#a4c0e6] via-[#5f92d8] to-[#3f76c4] pl-[4px]">
        <h1 id="dlg-title" className="flex-1 pt-[2px]">新建图层</h1>
        <button type="button" aria-label="关闭" className="mr-[4px] flex h-[10px] w-[28px] items-center justify-center rounded-b-[3px] border border-t-0 border-[#6b2020] bg-linear-to-b from-[#d88478] to-[#b02c1c]">
          <svg viewBox="0 0 6 5" className="h-[5px] w-[6px]"><path d="M.5 0l5 5M5.500 0l-5 5" stroke="#fff" strokeWidth="1.500" /></svg>
        </button>
      </div>
      <form className="flex flex-col gap-[6px] border border-[#dfe9f6] bg-[#f0f0f0] pt-[4px] pb-[5px]">
        <fieldset className={`${fs} pb-[5px]`}>
          <legend className={lg}>图层要素</legend>
          <div className="flex h-[12px] items-center pt-px pl-[3px]">
            <label htmlFor="name" className="w-[44px] shrink-0">图层名称</label>
            <input id="name" className="h-[12px] min-w-0 flex-1 border border-[#9fc4e8] bg-white px-[2px] outline-none" />
          </div>
          <div className="mt-[8px] flex h-[12px] items-center pl-[3px]">
            <label htmlFor="scale" className="w-[44px] shrink-0">图层比例尺</label>
            <input id="scale" defaultValue="500.000" className={`${field} h-[12px] w-[55px]`} />
            <span className="ml-px flex-1 whitespace-nowrap">注：为分母值，确定各种图例空间尺度</span>
          </div>
        </fieldset>
        <fieldset className={`${fs} pt-[4px] pb-[7px]`}>
          <legend className={lg}>屏幕显示范围</legend>
          <div className="flex h-[12px] items-center pl-[3px]">
            <label htmlFor="min">最小显示比例尺</label>
            <input id="min" className={`${field} ml-[2px] h-[12px] w-[55px]`} />
            <label htmlFor="max" className="ml-[12px]">最大显示比例尺</label>
            <input id="max" className={`${field} ml-[3px] h-[12px] w-[55px]`} />
          </div>
        </fieldset>
        <fieldset className={`${fs} pt-[2px] pb-[8px]`}>
          <legend className={lg}>图层类型</legend>
          <div className="flex gap-[51px] pl-[46px]">
            <label className="flex items-center gap-[2px]"><input type="radio" name="kind" defaultChecked className={radio} />地理图层</label>
            <label className="flex items-center gap-[2px]"><input type="radio" name="kind" className={radio} />平面图层</label>
          </div>
        </fieldset>
        <fieldset className={`${fs} pt-px pb-[2px]`}>
          <legend className={lg}><label htmlFor="memo">图层说明</label></legend>
          <div className="flex h-[56px] border border-[#e2e2e2] border-t-[#a8acb0]">
            <textarea id="memo" className="min-w-0 flex-1 resize-none bg-white p-[2px] outline-none" />
            <div className="flex w-[10px] flex-col items-center justify-between bg-[#f3f3f3]">
              <ScrollArrow d="M2 5h4L4 3z" />
              <ScrollArrow d="M2 3h4L4 5z" />
            </div>
          </div>
        </fieldset>
        <div className="mt-px flex justify-center gap-[33px] pl-[7px]">
          <button type="button" className="h-[13px] w-[43px] rounded-[2px] border border-[#2fa4cc] bg-linear-to-b from-[#eef8fc] to-[#bfe2f0] shadow-[inset_0_0_0_1px_#7fdcf4]">确定</button>
          <button type="button" className="h-[13px] w-[43px] rounded-[2px] border border-[#8a8a8a] bg-linear-to-b from-[#f4f4f4] to-[#d2d2d2]">取消</button>
        </div>
      </form>
    </div>
  );
}

function Callout() {
  return (
    <div className="absolute top-[82px] left-[518px] h-[110px] w-[268px]">
      <svg viewBox="0 0 268 110" className="absolute inset-0 size-full" aria-hidden="true">
        <path
          d="M26 1H254Q266 1 266 13V59Q266 71 254 71H118L1 108L57 71H26Q14 71 14 59V13Q14 1 26 1Z"
          fill="#fff"
          stroke="#111"
          strokeWidth="1.200"
        />
      </svg>
      <p className="relative flex items-center pt-[26px] pl-[37px] text-[21px] leading-[30px] font-bold whitespace-nowrap text-[#8b1014]">
        <span className="underline decoration-[#2030e8] decoration-wavy decoration-1 underline-offset-[3px]">输入图层名称</span>
        <span>、比例尺</span>
        <span className="text-[8px] leading-[10px] font-normal text-[#777]">↵</span>
      </p>
    </div>
  );
}

export default function App() {
  return (
    <div className="relative flex h-screen w-full flex-col overflow-hidden bg-white font-['Noto_Sans_CJK_SC',sans-serif]">
      <Toolbars />
      <div className="flex min-h-0 flex-1 overflow-hidden">
        <LeftDock />
        <div className="w-[5px] shrink-0 bg-linear-to-r from-[#4c4c4c] to-[#8a8a8a]" />
        <Workspace />
        <div className="w-[5px] shrink-0 bg-linear-to-r from-[#8a8a8a] to-[#4c4c4c]" />
        <RightDock />
      </div>
      <StatusBar />
      <Dialog />
      <Callout />
    </div>
  );
}
